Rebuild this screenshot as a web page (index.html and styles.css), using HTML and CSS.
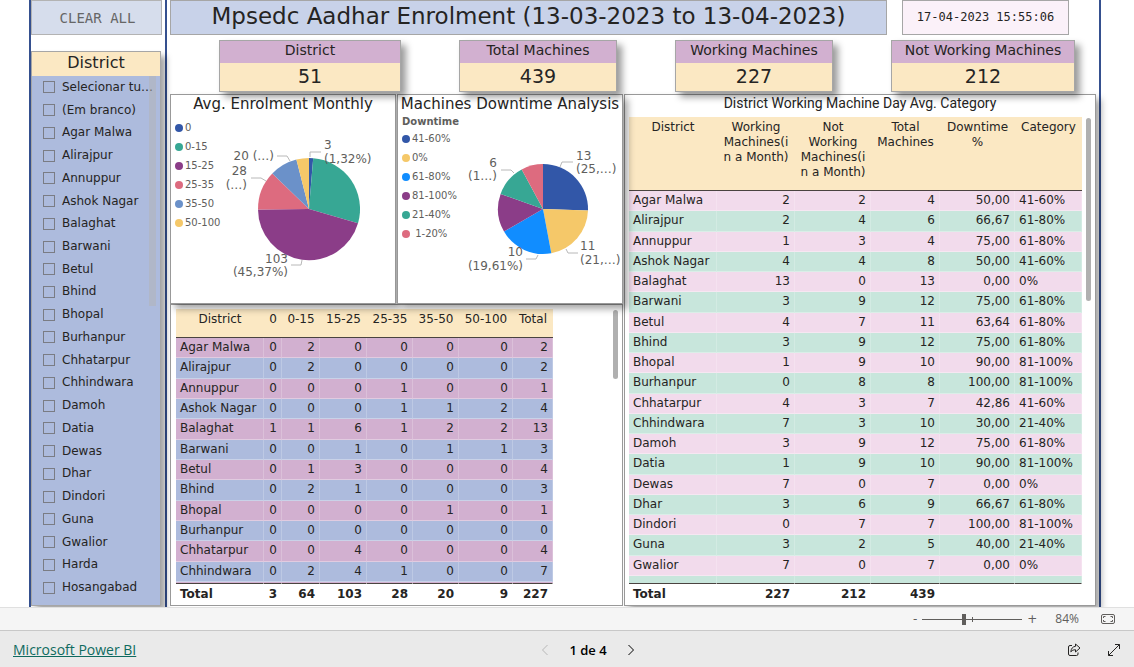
FILE: index.html
```html
<!DOCTYPE html>
<html lang="en">
<head>
<meta charset="utf-8">
<title>Mpsedc Aadhar Enrolment</title>
<link rel="stylesheet" href="styles.css">
</head>
<body>
<div class="report">
  <aside class="sidebar">
    <button class="clear" type="button">CLEAR ALL</button>
    <section class="slicer">
      <h2 class="slicer-title">District</h2>
      <div class="slicer-list">
        <label class="option"><input type="checkbox"><span>Selecionar tu…</span></label>
        <label class="option"><input type="checkbox"><span>(Em branco)</span></label>
        <label class="option"><input type="checkbox"><span>Agar Malwa</span></label>
        <label class="option"><input type="checkbox"><span>Alirajpur</span></label>
        <label class="option"><input type="checkbox"><span>Annuppur</span></label>
        <label class="option"><input type="checkbox"><span>Ashok Nagar</span></label>
        <label class="option"><input type="checkbox"><span>Balaghat</span></label>
        <label class="option"><input type="checkbox"><span>Barwani</span></label>
        <label class="option"><input type="checkbox"><span>Betul</span></label>
        <label class="option"><input type="checkbox"><span>Bhind</span></label>
        <label class="option"><input type="checkbox"><span>Bhopal</span></label>
        <label class="option"><input type="checkbox"><span>Burhanpur</span></label>
        <label class="option"><input type="checkbox"><span>Chhatarpur</span></label>
        <label class="option"><input type="checkbox"><span>Chhindwara</span></label>
        <label class="option"><input type="checkbox"><span>Damoh</span></label>
        <label class="option"><input type="checkbox"><span>Datia</span></label>
        <label class="option"><input type="checkbox"><span>Dewas</span></label>
        <label class="option"><input type="checkbox"><span>Dhar</span></label>
        <label class="option"><input type="checkbox"><span>Dindori</span></label>
        <label class="option"><input type="checkbox"><span>Guna</span></label>
        <label class="option"><input type="checkbox"><span>Gwalior</span></label>
        <label class="option"><input type="checkbox"><span>Harda</span></label>
        <label class="option"><input type="checkbox"><span>Hosangabad</span></label>
        <i class="slicer-scroll"></i>
      </div>
    </section>
  </aside>

  <main class="main">
    <header class="top">
      <h1 class="title">Mpsedc Aadhar Enrolment (13-03-2023 to 13-04-2023)</h1>
      <time class="stamp">17-04-2023 15:55:06</time>
    </header>

    <div class="cards">
      <section class="card"><h2>District</h2><p>51</p></section>
      <section class="card"><h2>Total Machines</h2><p>439</p></section>
      <section class="card"><h2>Working Machines</h2><p>227</p></section>
      <section class="card"><h2>Not Working Machines</h2><p>212</p></section>
    </div>

    <div class="panels">
      <div class="left">
        <div class="charts">
          <section class="panel chart">
            <h2 class="chart-title">Avg. Enrolment Monthly</h2>
            <div class="chart-body">
              <ul class="legend legend-a">
                <li><i class="dot navy"></i>0</li>
                <li><i class="dot green"></i>0-15</li>
                <li><i class="dot purple"></i>15-25</li>
                <li><i class="dot rose"></i>25-35</li>
                <li><i class="dot blue"></i>35-50</li>
                <li><i class="dot gold"></i>50-100</li>
              </ul>
              <svg class="pie" viewBox="-87 -94 173 188">
                <path class="navy" d="M0 0L0 -51A51 51 0 0 1 4.2 -50.8Z"/>
                <path class="green" d="M0 0L4.2 -50.8A51 51 0 0 1 49 14.3Z"/>
                <path class="purple" d="M0 0L49 14.3A51 51 0 0 1 -51 .4Z"/>
                <path class="rose" d="M0 0L-51 .4A51 51 0 0 1 -36.7 -35.4Z"/>
                <path class="blue" d="M0 0L-36.7 -35.4A51 51 0 0 1 -12.6 -49.4Z"/>
                <path class="gold" d="M0 0L-12.6 -49.4A51 51 0 0 1 0 -51Z"/>
                <g class="leader">
                  <path d="M1 -52V-57H12"/>
                  <path d="M-32 -53H-22L-19 -48"/>
                  <path d="M-58 -31H-48L-43 -28"/>
                  <path d="M-18 56H-8L-7 51"/>
                </g>
                <text x="15" y="-60">3</text>
                <text x="15" y="-46">(1,32%)</text>
                <text class="end" x="-35" y="-49">20 (…)</text>
                <text class="end" x="-62" y="-34">28</text>
                <text class="end" x="-62" y="-20">(…)</text>
                <text class="end" x="-21" y="54">103</text>
                <text class="end" x="-21" y="67">(45,37%)</text>
              </svg>
            </div>
          </section>
          <section class="panel chart">
            <h2 class="chart-title">Machines Downtime Analysis</h2>
            <div class="chart-body">
              <ul class="legend legend-b">
                <li class="legend-name">Downtime</li>
                <li><i class="dot navy"></i>41-60%</li>
                <li><i class="dot gold"></i>0%</li>
                <li><i class="dot sky"></i>61-80%</li>
                <li><i class="dot purple"></i>81-100%</li>
                <li><i class="dot green"></i>21-40%</li>
                <li><i class="dot rose"></i>&nbsp;1-20%</li>
              </ul>
              <svg class="pie" viewBox="-78 -94 157 188">
                <path class="navy" d="M0 0L0 -45A45 45 0 0 1 45 1.4Z"/>
                <path class="gold" d="M0 0L45 1.4A45 45 0 0 1 8.3 44.2Z"/>
                <path class="sky" d="M0 0L8.3 44.2A45 45 0 0 1 -39 22.5Z"/>
                <path class="purple" d="M0 0L-39 22.5A45 45 0 0 1 -42.4 -15Z"/>
                <path class="green" d="M0 0L-42.4 -15A45 45 0 0 1 -21.3 -39.6Z"/>
                <path class="rose" d="M0 0L-21.3 -39.6A45 45 0 0 1 0 -45Z"/>
                <g class="leader">
                  <path d="M30 -47H19L17 -42"/>
                  <path d="M-42 -39H-32L-29 -36"/>
                  <path d="M35 44H25L23 40"/>
                  <path d="M-17 50H-7L-5 46"/>
                </g>
                <text x="33" y="-49">13</text>
                <text x="33" y="-36">(25,…)</text>
                <text class="end" x="-46" y="-42">6</text>
                <text class="end" x="-46" y="-29">(1…)</text>
                <text x="37" y="41">11</text>
                <text x="37" y="55">(21,…)</text>
                <text class="end" x="-20" y="47">10</text>
                <text class="end" x="-20" y="61">(19,61%)</text>
              </svg>
            </div>
          </section>
        </div>

        <section class="panel matrix">
          <table class="data monthly">
            <colgroup><col class="w88"><col class="w18"><col class="w38"><col class="w47"><col class="w46"><col class="w46"><col class="w54"><col class="w40"></colgroup>
            <thead><tr><th>District</th><th>0</th><th>0-15</th><th>15-25</th><th>25-35</th><th>35-50</th><th>50-100</th><th>Total</th></tr></thead>
            <tbody>
              <tr><td>Agar Malwa</td><td>0</td><td>2</td><td>0</td><td>0</td><td>0</td><td>0</td><td>2</td></tr>
              <tr><td>Alirajpur</td><td>0</td><td>2</td><td>0</td><td>0</td><td>0</td><td>0</td><td>2</td></tr>
              <tr><td>Annuppur</td><td>0</td><td>0</td><td>0</td><td>1</td><td>0</td><td>0</td><td>1</td></tr>
              <tr><td>Ashok Nagar</td><td>0</td><td>0</td><td>0</td><td>1</td><td>1</td><td>2</td><td>4</td></tr>
              <tr><td>Balaghat</td><td>1</td><td>1</td><td>6</td><td>1</td><td>2</td><td>2</td><td>13</td></tr>
              <tr><td>Barwani</td><td>0</td><td>0</td><td>1</td><td>0</td><td>1</td><td>1</td><td>3</td></tr>
              <tr><td>Betul</td><td>0</td><td>1</td><td>3</td><td>0</td><td>0</td><td>0</td><td>4</td></tr>
              <tr><td>Bhind</td><td>0</td><td>2</td><td>1</td><td>0</td><td>0</td><td>0</td><td>3</td></tr>
              <tr><td>Bhopal</td><td>0</td><td>0</td><td>0</td><td>0</td><td>1</td><td>0</td><td>1</td></tr>
              <tr><td>Burhanpur</td><td>0</td><td>0</td><td>0</td><td>0</td><td>0</td><td>0</td><td>0</td></tr>
              <tr><td>Chhatarpur</td><td>0</td><td>0</td><td>4</td><td>0</td><td>0</td><td>0</td><td>4</td></tr>
              <tr><td>Chhindwara</td><td>0</td><td>2</td><td>4</td><td>1</td><td>0</td><td>0</td><td>7</td></tr>
              <tr class="cut cut-thin"><td></td><td></td><td></td><td></td><td></td><td></td><td></td><td></td></tr>
            </tbody>
            <tfoot><tr><td>Total</td><td>3</td><td>64</td><td>103</td><td>28</td><td>20</td><td>9</td><td>227</td></tr></tfoot>
          </table>
          <i class="scroll scroll-short"></i>
        </section>
      </div>

      <section class="panel category">
        <h2 class="category-title">District Working Machine Day Avg. Category</h2>
        <div class="category-body">
          <table class="data machines">
            <colgroup><col class="w88"><col class="w78"><col class="w76"><col class="w69"><col class="w75"><col class="w67"></colgroup>
            <thead><tr><th>District</th><th>Working Machines(in a Month)</th><th>Not Working Machines(in a Month)</th><th>Total Machines</th><th>Downtime %</th><th>Category</th></tr></thead>
            <tbody>
              <tr><td>Agar Malwa</td><td>2</td><td>2</td><td>4</td><td>50,00</td><td>41-60%</td></tr>
              <tr><td>Alirajpur</td><td>2</td><td>4</td><td>6</td><td>66,67</td><td>61-80%</td></tr>
              <tr><td>Annuppur</td><td>1</td><td>3</td><td>4</td><td>75,00</td><td>61-80%</td></tr>
              <tr><td>Ashok Nagar</td><td>4</td><td>4</td><td>8</td><td>50,00</td><td>41-60%</td></tr>
              <tr><td>Balaghat</td><td>13</td><td>0</td><td>13</td><td>0,00</td><td>0%</td></tr>
              <tr><td>Barwani</td><td>3</td><td>9</td><td>12</td><td>75,00</td><td>61-80%</td></tr>
              <tr><td>Betul</td><td>4</td><td>7</td><td>11</td><td>63,64</td><td>61-80%</td></tr>
              <tr><td>Bhind</td><td>3</td><td>9</td><td>12</td><td>75,00</td><td>61-80%</td></tr>
              <tr><td>Bhopal</td><td>1</td><td>9</td><td>10</td><td>90,00</td><td>81-100%</td></tr>
              <tr><td>Burhanpur</td><td>0</td><td>8</td><td>8</td><td>100,00</td><td>81-100%</td></tr>
              <tr><td>Chhatarpur</td><td>4</td><td>3</td><td>7</td><td>42,86</td><td>41-60%</td></tr>
              <tr><td>Chhindwara</td><td>7</td><td>3</td><td>10</td><td>30,00</td><td>21-40%</td></tr>
              <tr><td>Damoh</td><td>3</td><td>9</td><td>12</td><td>75,00</td><td>61-80%</td></tr>
              <tr><td>Datia</td><td>1</td><td>9</td><td>10</td><td>90,00</td><td>81-100%</td></tr>
              <tr><td>Dewas</td><td>7</td><td>0</td><td>7</td><td>0,00</td><td>0%</td></tr>
              <tr><td>Dhar</td><td>3</td><td>6</td><td>9</td><td>66,67</td><td>61-80%</td></tr>
              <tr><td>Dindori</td><td>0</td><td>7</td><td>7</td><td>100,00</td><td>81-100%</td></tr>
              <tr><td>Guna</td><td>3</td><td>2</td><td>5</td><td>40,00</td><td>21-40%</td></tr>
              <tr><td>Gwalior</td><td>7</td><td>0</td><td>7</td><td>0,00</td><td>0%</td></tr>
              <tr class="cut"><td></td><td></td><td></td><td></td><td></td><td></td></tr>
            </tbody>
            <tfoot><tr><td>Total</td><td>227</td><td>212</td><td>439</td><td></td><td></td></tr></tfoot>
          </table>
          <i class="scroll scroll-long"></i>
        </div>
      </section>
    </div>
  </main>
</div>

<div class="zoombar">
  <button type="button" class="plain" aria-label="Zoom out">-</button>
  <div class="slider"><input type="range" min="0" max="100" value="41" aria-label="Zoom"></div>
  <button type="button" class="plain" aria-label="Zoom in">+</button>
  <span class="percent">84%</span>
  <button type="button" class="plain fit" aria-label="Fit to page">
    <svg width="14" height="10" viewBox="0 0 14 10"><rect x=".5" y=".5" width="13" height="9" rx="1.5"/><path d="M4.5 2.5H2.5V4M2.5 6V7.5H4.5M9.5 2.5H11.5V4M11.5 6V7.5H9.5"/></svg>
  </button>
</div>

<footer class="footer">
  <a class="brand" href="#">Microsoft Power BI</a>
  <nav class="pager">
    <button type="button" class="plain dim" aria-label="Previous page"><svg width="8" height="12" viewBox="0 0 8 12"><path d="M6.5 1L1.5 6L6.5 11"/></svg></button>
    <span>1 de 4</span>
    <button type="button" class="plain" aria-label="Next page"><svg width="8" height="12" viewBox="0 0 8 12"><path d="M1.5 1L6.5 6L1.5 11"/></svg></button>
  </nav>
  <div class="actions">
    <button type="button" class="plain" aria-label="Share"><svg width="14" height="14" viewBox="0 0 14 14"><path d="M5 2.5H3Q1.500 2.500 1.500 4V11Q1.500 12.500 3 12.500H9.500Q11 12.500 11 11V9.500"/><path d="M8.500 1L13 5L8.500 9V6.700Q5.500 6.500 3.800 8.800Q4.300 3.800 8.500 3.300Z"/></svg></button>
    <button type="button" class="plain" aria-label="Full screen"><svg width="14" height="14" viewBox="0 0 14 14"><path d="M1.5 12.5L12.5 1.5M8 1.5H12.5V6M1.5 8V12.5H6"/></svg></button>
  </div>
</footer>
</body>
</html>
```
FILE: styles.css
```css
* { box-sizing: border-box; }

body {
  margin: 0;
  min-height: 100vh;
  display: flex;
  flex-direction: column;
  background: #fff;
  color: #252423;
  font: 12px/15px "DejaVu Sans", Verdana, sans-serif;
}

h1, h2, p, ul { margin: 0; padding: 0; font-weight: normal; }
button { font: inherit; color: inherit; cursor: pointer; }

.report {
  flex: 1;
  display: flex;
  margin: 0 33px 0 29px;
  border: solid #35508f;
  border-width: 0 2px;
}

/* Sidebar */
.sidebar {
  width: 136px;
  flex: none;
  display: flex;
  flex-direction: column;
  gap: 16px;
  padding: 0 3px 1px 0;
  border-right: 2px solid #35508f;
}
.clear {
  height: 35px;
  padding: 0 0 0 2px;
  border: 1px solid #b3b3b3;
  background: #d6ddec;
  color: #666;
  font: 14px "DejaVu Sans Mono", monospace;
}
.slicer {
  flex: 1;
  display: flex;
  flex-direction: column;
  margin-right: 1px;
  border: 1px solid #a6a6a6;
  background: #adbbdd;
  box-shadow: 5px 5px 6px rgba(0, 0, 0, .35);
}
.slicer-title {
  padding-bottom: 2px;
  background: #fbe8c3;
  text-align: center;
  font-size: 16px;
  line-height: 22px;
}
.slicer-list {
  position: relative;
  flex: 1;
  display: flex;
  flex-direction: column;
  padding: 0 0 6px 11px;
}
.option {
  flex: 1;
  display: flex;
  align-items: center;
  gap: 7px;
  white-space: nowrap;
}
.option input {
  appearance: none;
  width: 12px;
  height: 12px;
  margin: 0;
  border: 1px solid #7a7c84;
}
.slicer-scroll {
  position: absolute;
  top: 0;
  right: 4px;
  width: 7px;
  height: 230px;
  background: rgba(180, 180, 180, .5);
}

/* Header */
.main {
  flex: 1;
  min-width: 0;
  display: flex;
  flex-direction: column;
  padding: 0 3px 1px;
}
.top { display: flex; gap: 15px; padding-right: 27px; }
.title {
  flex: 1;
  border: 1px solid #a6a6a6;
  background: #c8d2e9;
  text-align: center;
  font-size: 23px;
  line-height: 31px;
}
.stamp {
  width: 167px;
  border: 1px solid #a6a6a6;
  background: #fbf1f9;
  text-align: center;
  font: 12px/33px "DejaVu Sans Mono", monospace;
}

/* Cards */
.cards {
  position: relative;
  z-index: 2;
  display: grid;
  grid-template-columns: 182fr 158fr 158fr 184fr;
  gap: 58px;
  padding: 5px 21px 2px 49px;
}
.card {
  border: 1px solid #a6a6a6;
  background: #fbe8c3;
  box-shadow: 5px 5px 7px rgba(0, 0, 0, .4);
  text-align: center;
  white-space: nowrap;
}
.card h2 { padding-bottom: 4px; background: #d2b0d0; font-size: 14px; line-height: 18px; }
.card p { padding-bottom: 2px; font-size: 19px; line-height: 26px; }

/* Panels */
.panels { flex: 1; display: grid; grid-template-columns: 453fr 472fr; gap: 1px; }
.left { display: flex; flex-direction: column; min-width: 0; }
.panel {
  border: 1px solid #999;
  background: #fff;
  box-shadow: 5px 5px 7px rgba(0, 0, 0, .35);
}
.charts {
  position: relative;
  z-index: 1;
  display: grid;
  grid-template-columns: 1fr 1fr;
  gap: 1px;
}
.chart-title {
  padding-bottom: 2px;
  text-align: center;
  font-size: 15px;
  line-height: 18px;
  white-space: nowrap;
}
.chart-body { display: flex; align-items: flex-start; }
.legend {
  flex: none;
  list-style: none;
  padding-left: 4px;
  font-size: 10px;
  line-height: 19px;
  color: #605e5c;
  white-space: nowrap;
}
.legend-a { width: 51px; padding-top: 3px; }
.legend-b { width: 67px; }
.legend-name { line-height: 14px; font-weight: bold; }
.legend li { display: flex; align-items: center; gap: 2px; }
.dot { width: 8px; height: 8px; border-radius: 50%; }
.pie { flex: 1; min-width: 0; font-size: 12px; }
.pie text { fill: #605e5c; }
.pie .end { text-anchor: end; }
.leader { fill: none; stroke: #b8b8b8; }
.navy { background: #3257a8; fill: #3257a8; }
.green { background: #37a794; fill: #37a794; }
.purple { background: #8b3d88; fill: #8b3d88; }
.rose { background: #dd6b7f; fill: #dd6b7f; }
.blue { background: #6b91c9; fill: #6b91c9; }
.gold { background: #f5c869; fill: #f5c869; }
.sky { background: #118dff; fill: #118dff; }

/* Tables */
.data { width: 100%; table-layout: fixed; border-collapse: separate; border-spacing: 0; }
.data th {
  padding: 3px 4px 0;
  border-bottom: 1px solid #4a4340;
  background: #fbe8c3;
  font-weight: normal;
  vertical-align: top;
  overflow-wrap: anywhere;
}
.data td {
  padding: 0 4px;
  border-right: 1px solid rgba(255, 255, 255, .2);
  border-bottom: 1px solid rgba(255, 255, 255, .35);
  text-align: right;
  line-height: 19px;
  white-space: nowrap;
}
.data td:first-child { text-align: left; }
.data tfoot td {
  height: 22px;
  border-bottom: 0;
  border-top: 1px solid #4a4340;
  font-weight: bold;
}
.matrix {
  position: relative;
  flex: 1;
  display: flex;
  padding: 4px 69px 0 5px;
  box-shadow: none;
}
.monthly th { height: 29px; }
.monthly tbody tr:nth-child(odd) { background: #d2b0d0; }
.monthly tbody tr:nth-child(even) { background: #adbbdd; }
.category { display: flex; flex-direction: column; }
.category-title { text-align: center; font: 14px/17px Roboto, sans-serif; }
.category-body { position: relative; flex: 1; display: flex; padding: 5px 13px 0 4px; }
.machines th { height: 74px; }
.machines tbody tr:nth-child(odd) { background: #f2dbec; }
.machines tbody tr:nth-child(even) { background: #c8e6dc; }
.machines tbody td:last-child { text-align: left; }
.data .cut td { height: 7px; padding: 0; border-bottom: 0; }
.data .cut-thin td { height: 1px; }
.scroll {
  position: absolute;
  right: 4px;
  width: 5px;
  border-radius: 3px;
  background: #b0b0b0;
}
.scroll-short { top: 5px; height: 69px; }
.scroll-long { top: 6px; height: 183px; }
.w18 { width: 18px; }
.w38 { width: 38px; }
.w40 { width: 40px; }
.w46 { width: 46px; }
.w47 { width: 47px; }
.w54 { width: 54px; }
.w67 { width: 67px; }
.w69 { width: 69px; }
.w75 { width: 75px; }
.w76 { width: 76px; }
.w78 { width: 78px; }
.w88 { width: 88px; }

/* Bottom bars */
.plain { display: flex; padding: 0; border: 0; background: none; }
.plain svg { fill: none; stroke: currentColor; stroke-width: 1; }
.zoombar {
  position: relative;
  z-index: 2;
  display: flex;
  align-items: center;
  justify-content: flex-end;
  height: 23px;
  padding-right: 19px;
  border-top: 1px solid #e0e0e0;
  background: #f5f5f5;
  color: #605e5c;
}
.slider { position: relative; display: flex; width: 100px; margin: 0 5px; }
.slider::after {
  content: "";
  position: absolute;
  left: 50px;
  top: 3px;
  width: 1px;
  height: 5px;
  background: #605e5c;
}
.slider input {
  appearance: none;
  width: 100%;
  height: 11px;
  margin: 0;
  background: linear-gradient(#605e5c, #605e5c) center / 100% 1px no-repeat;
}
.slider input::-webkit-slider-thumb {
  appearance: none;
  width: 4px;
  height: 11px;
  background: #605e5c;
}
.percent { margin: 0 22px 0 18px; font: 12px/16px "Open Sans", sans-serif; }
.footer {
  position: relative;
  z-index: 2;
  display: grid;
  grid-template-columns: 1fr auto 1fr;
  align-items: center;
  height: 37px;
  padding: 2px 13px 0;
  border-top: 1px solid #c8c8c8;
  background: #eaeaea;
  color: #252423;
  font: 14px/20px "Open Sans", sans-serif;
}
.brand { justify-self: start; color: #0f6a5f; }
.pager { display: flex; align-items: center; gap: 20px; margin-left: 42px; font-size: 13px; font-weight: 600; color: #000; }
.dim { color: #b8b8b8; }
.actions { display: flex; justify-content: flex-end; gap: 26px; }
```
